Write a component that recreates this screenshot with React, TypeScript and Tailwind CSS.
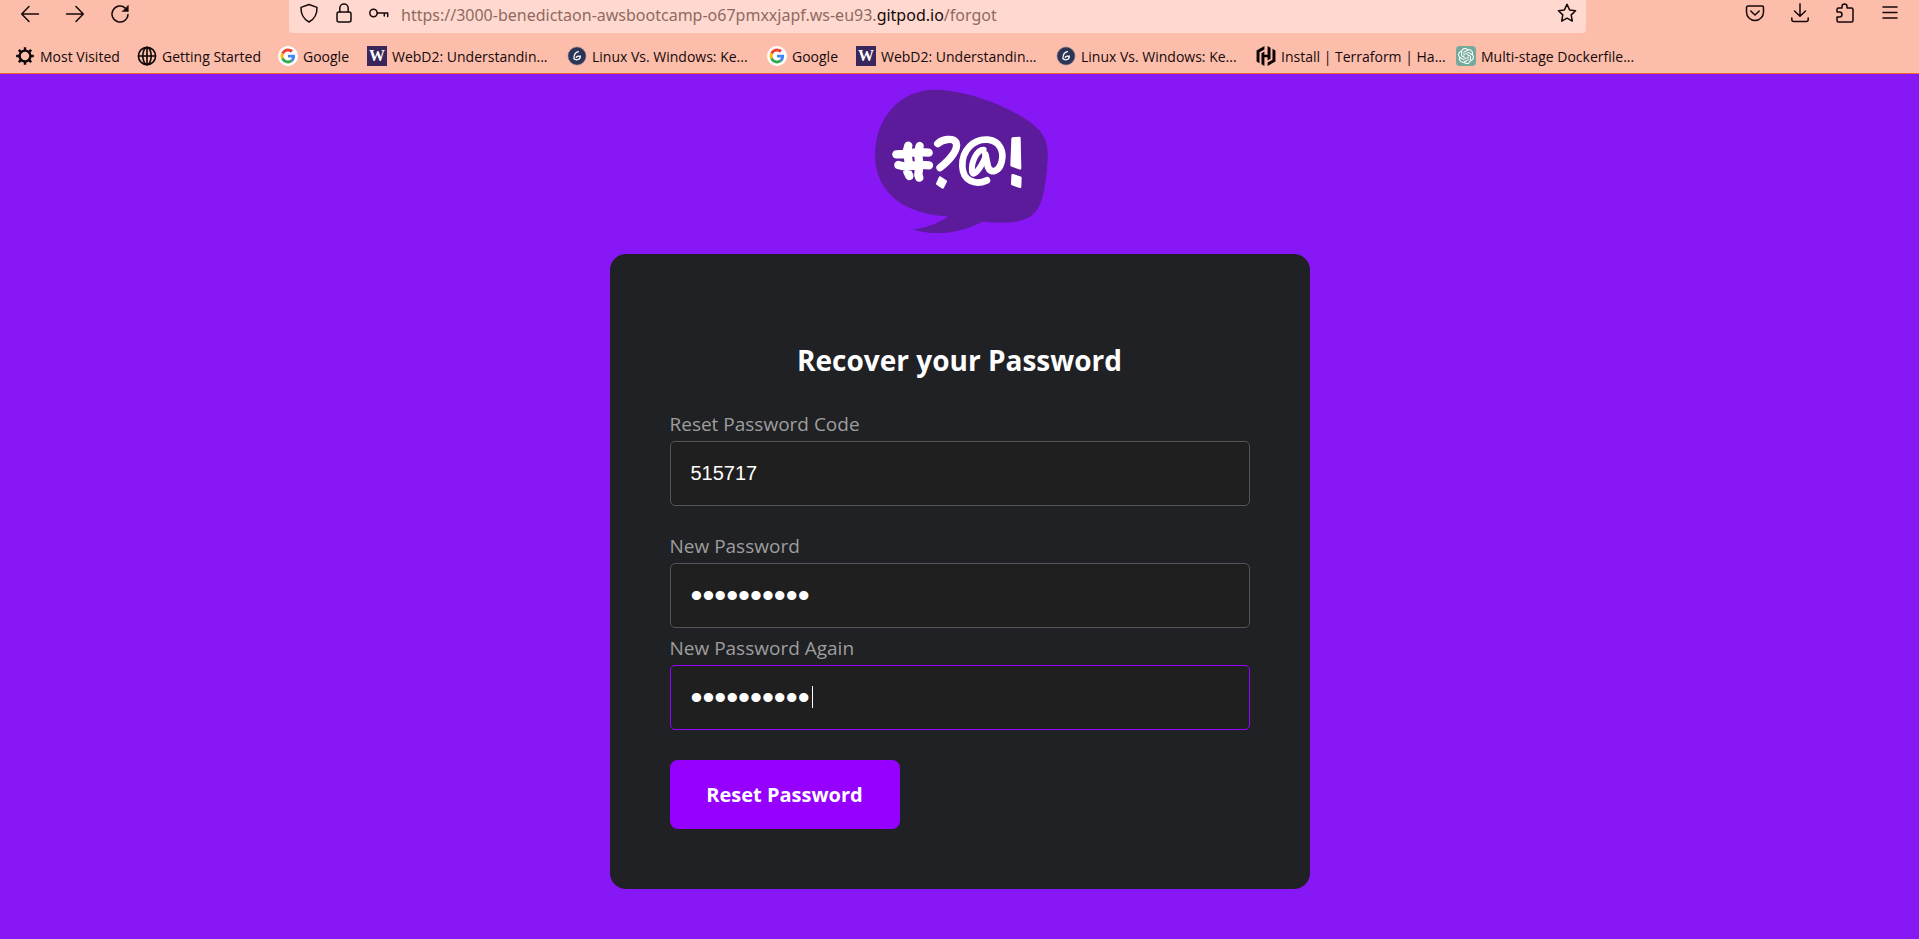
import type { ReactNode } from "react";
import { SiHashicorp, SiOpenai } from "react-icons/si";

const line = {
  fill: "none",
  stroke: "currentColor",
  strokeWidth: 1.5,
  strokeLinecap: "round" as const,
  strokeLinejoin: "round" as const,
};

function Icon({ children }: { children: ReactNode }) {
  return (
    <svg viewBox="0 0 20 20" className="h-5 w-5 shrink-0" aria-hidden="true" {...line}>
      {children}
    </svg>
  );
}

function GearIcon() {
  return (
    <svg viewBox="0 0 20 20" className="h-5 w-5 shrink-0" aria-hidden="true" fill="none" stroke="#0c0406">
      <circle cx="10" cy="10" r="5.4" strokeWidth="2.4" />
      <g strokeWidth="2.4">
        <path d="M10 1.2v3M10 15.8v3M1.2 10h3M15.8 10h3M3.8 3.8l2.1 2.1M14.1 14.1l2.1 2.1M3.8 16.2l2.1-2.1M14.1 5.9l2.1-2.1" />
      </g>
    </svg>
  );
}

function GlobeIcon() {
  return (
    <svg viewBox="0 0 20 20" className="h-5 w-5 shrink-0" aria-hidden="true" fill="none" stroke="#0c0406" strokeWidth="1.6">
      <circle cx="10" cy="10" r="8.6" />
      <ellipse cx="10" cy="10" rx="4.2" ry="8.6" />
      <path d="M1.4 10h17.2M10 1.4v17.2" />
    </svg>
  );
}

function GoogleIcon() {
  return (
    <svg viewBox="0 0 20 20" className="h-5 w-5 shrink-0" aria-hidden="true">
      <circle cx="10" cy="10" r="10" fill="#fff" />
      <g transform="translate(2.6 2.6) scale(0.308)">
        <path fill="#EA4335" d="M24 9.5c3.54 0 6.71 1.22 9.21 3.6l6.85-6.85C35.9 2.38 30.47 0 24 0 14.62 0 6.51 5.38 2.56 13.22l7.98 6.19C12.43 13.72 17.74 9.5 24 9.5z" />
        <path fill="#4285F4" d="M46.98 24.55c0-1.57-.15-3.09-.38-4.55H24v9.02h12.94c-.58 2.96-2.26 5.48-4.78 7.18l7.73 6c4.51-4.18 7.09-10.36 7.09-17.65z" />
        <path fill="#FBBC05" d="M10.53 28.59c-.48-1.45-.76-2.99-.76-4.59s.27-3.14.76-4.59l-7.98-6.19C.92 16.46 0 20.12 0 24c0 3.88.92 7.54 2.56 10.78l7.97-6.19z" />
        <path fill="#34A853" d="M24 48c6.48 0 11.93-2.13 15.89-5.81l-7.73-6c-2.15 1.45-4.92 2.3-8.16 2.3-6.26 0-11.57-4.22-13.47-9.91l-7.98 6.19C6.51 42.62 14.62 48 24 48z" />
      </g>
    </svg>
  );
}

function UwIcon() {
  return (
    <span className="flex h-5 w-5 shrink-0 items-center justify-center bg-[#39275b] font-['Liberation_Serif',serif] text-base leading-5 font-bold text-white" aria-hidden="true">
      W
    </span>
  );
}

function GeekIcon() {
  return (
    <svg viewBox="0 0 20 20" className="h-5 w-5 shrink-0" aria-hidden="true">
      <circle cx="10" cy="10" r="9" fill="#2b3556" stroke="#8a7c8a" strokeWidth="0.6" />
      <path d="M11.400 5.600C9 6 7 8.800 6.900 12.400M6.900 12.800c1.800 1.600 5.800 1.200 6.200-1.200.2-1.700-2.400-2-3.800-.4M13.200 9.800v2" fill="none" stroke="#fff" strokeWidth="1.3" strokeLinecap="round" />
    </svg>
  );
}

function HashiIcon() {
  return <SiHashicorp className="h-5 w-5 shrink-0 text-[#0c0406]" aria-hidden="true" />;
}

function ChatIcon() {
  return (
    <span className="flex h-5 w-5 shrink-0 items-center justify-center rounded-sm bg-[#74aa9c] text-white">
      <SiOpenai className="h-4 w-4" aria-hidden="true" />
    </span>
  );
}

const bookmarks: { label: string; icon: ReactNode; width: string }[] = [
  { label: "Most Visited", icon: <GearIcon />, width: "w-[122px]" },
  { label: "Getting Started", icon: <GlobeIcon />, width: "w-[141px]" },
  { label: "Google", icon: <GoogleIcon />, width: "w-[89px]" },
  { label: "WebD2: Understandin...", icon: <UwIcon />, width: "w-[200px]" },
  { label: "Linux Vs. Windows: Ke...", icon: <GeekIcon />, width: "w-[200px]" },
  { label: "Google", icon: <GoogleIcon />, width: "w-[89px]" },
  { label: "WebD2: Understandin...", icon: <UwIcon />, width: "w-[200px]" },
  { label: "Linux Vs. Windows: Ke...", icon: <GeekIcon />, width: "w-[200px]" },
  { label: "Install | Terraform | Ha...", icon: <HashiIcon />, width: "w-[200px]" },
  { label: "Multi-stage Dockerfile...", icon: <ChatIcon />, width: "w-[200px]" },
];

function BrowserBar() {
  return (
    <header className="border-b border-[#f0642d] bg-[#fcbdab] text-[#15090a]">
      <div className="flex h-[33px] items-start">
        <div className="flex w-[289px] shrink-0 gap-[25px] pt-1 pl-5">
          <button type="button" aria-label="Back">
            <Icon><path d="M18.500 10H2M9 2.500 1.700 10 9 17.500" /></Icon>
          </button>
          <button type="button" aria-label="Forward">
            <Icon><path d="M1.500 10H18M11 2.500 18.300 10 11 17.500" /></Icon>
          </button>
          <button type="button" aria-label="Reload">
            <Icon>
              <path d="M15.500 4.200A8 8 0 1 0 18 10.500" />
              <path d="M18.300 1.500v6h-6z" fill="currentColor" strokeWidth="0.5" />
            </Icon>
          </button>
        </div>
        <div className="flex h-[33px] flex-1 items-start rounded-b bg-[#ffd9cf] pt-[3px] pr-[9px] pl-[10px]">
          <div className="flex gap-[15px]">
            <Icon><path d="M10 1.500 18 4.400c.2 5.600-1.600 11.200-8 14.600C3.600 15.600 1.800 10 2 4.400z" /></Icon>
            <Icon>
              <rect x="3" y="9" width="14" height="10" rx="2" />
              <path d="M5.800 9V5.200a4.200 4.200 0 0 1 8.400 0V9" />
            </Icon>
            <Icon>
              <circle cx="4.500" cy="10" r="3.700" />
              <path d="M8.200 10h10.500v3.500M15.300 10v3" />
            </Icon>
          </div>
          <p className="ml-3 flex-1 font-['Noto_Sans',sans-serif] text-base leading-6 whitespace-nowrap text-[#8f6a62]">
            https://3000-benedictaon-awsbootcamp-o67pmxxjapf.ws-eu93.<span className="text-[#15090a]">gitpod.io</span>/forgot
          </p>
          <button type="button" aria-label="Bookmark this page">
            <Icon><path d="m10 1.300 2.600 5.600 6 .8-4.400 4.200 1.100 6.200L10 15.200l-5.300 2.900 1.100-6.200L1.400 7.700l6-.8z" /></Icon>
          </button>
        </div>
        <div className="flex w-[333px] shrink-0 justify-end gap-[25px] pt-[3px] pr-[19px]">
          <button type="button" aria-label="Save to Pocket">
            <Icon>
              <path d="M3 3h14a1.500 1.500 0 0 1 1.500 1.500V9a8.500 8.500 0 0 1-17 0V4.500A1.500 1.500 0 0 1 3 3z" />
              <path d="m5.800 8 4.200 4 4.200-4" />
            </Icon>
          </button>
          <button type="button" aria-label="Downloads">
            <Icon><path d="M10 .8v12M4.500 8 10 13.200 15.500 8M1.800 15v1.500a2 2 0 0 0 2 2h12.400a2 2 0 0 0 2-2V15" /></Icon>
          </button>
          <button type="button" aria-label="Extensions">
            <Icon><path d="M2 8V6.500A1.500 1.500 0 0 1 3.500 5H7V3.500a2.500 2.500 0 0 1 5 0V5h4.500A1.500 1.500 0 0 1 18 6.500v11a1.500 1.500 0 0 1-1.500 1.500h-13A1.500 1.500 0 0 1 2 17.500V14h2.500a2 2 0 0 0 0-5H2z" /></Icon>
          </button>
          <button type="button" aria-label="Menu">
            <Icon><path d="M3 4h14M3 9.500h14M3 15h14" /></Icon>
          </button>
        </div>
      </div>
      <nav aria-label="Bookmarks" className="flex h-10 items-center pt-[6px] pl-[15px] font-['Open_Sans',sans-serif] text-sm text-[#15090a]">
        {bookmarks.map((b, i) => (
          <a key={i} href="#" className={`flex shrink-0 items-center gap-[5px] whitespace-nowrap ${b.width}`}>
            {b.icon}
            <span className="pt-px">{b.label}</span>
          </a>
        ))}
      </nav>
    </header>
  );
}

function Logo() {
  return (
    <svg viewBox="0 0 600 570" className="mt-px h-[190px] w-[200px]" role="img" aria-label="Cruddur">
      <path
        fill="#5b1b9a"
        d="M230 44C120 42 45 130 45 240C45 350 130 418 264 424C240 444 200 458 160 464C230 484 300 474 368 440C420 444 470 446 505 428C545 405 552 360 560 290C566 230 566 200 538 166C480 105 330 46 230 44Z"
      />
      <g fill="none" stroke="#fff" strokeLinecap="round" strokeLinejoin="round">
        <path strokeWidth="25" d="M145 212 141 226 146 262 142 290 148 303M179 213 174 232 178 268 175 300 178 308M109 238 132 237 172 231 206 233M115 270 140 276 175 269 207 271" />
        <path strokeWidth="22" d="M233 206C249 192 278 188 288 202C297 224 268 256 240 278" />
        <path strokeWidth="20" d="M381 316C345 332 309 318 307 274C305 225 342 190 384 194C422 198 432 232 425 260C418 290 392 298 384 276L376 238" />
        <path strokeWidth="18" d="M371 224C350 224 333 262 336 290C340 309 362 280 377 244" />
      </g>
      <g fill="#fff" stroke="#fff" strokeWidth="8" strokeLinejoin="round">
        <path d="M240 308 257 319 248 337 232 326Z" />
        <path d="M458 191 478 189 480 280 455 271Z" />
        <path d="M458 301 481 308 480 335 457 327Z" />
      </g>
    </svg>
  );
}

type FieldProps = { id: string; label: string; value: string; secret?: boolean; active?: boolean };

function Field({ id, label, value, secret, active }: FieldProps) {
  return (
    <div className="flex flex-col">
      <label htmlFor={id} className="mb-[3px] text-[19px] leading-[27px] text-[#9e9e9e]">
        {label}
      </label>
      <div className="relative">
        <input
          id={id}
          type={secret ? "password" : "text"}
          defaultValue={value}
          autoFocus={active}
          className={`block h-[65px] w-full rounded-[5px] border border-[#555557] bg-[#1f1f1f] px-5 font-['Liberation_Sans',Arial,sans-serif] text-white caret-transparent outline-none focus:border-[#9500ff] ${secret ? "text-[34px]" : "text-xl"}`}
        />
        {active && <span aria-hidden="true" className="absolute top-[21px] left-[142px] h-[22px] w-px bg-white" />}
      </div>
    </div>
  );
}

export default function App() {
  return (
    <div className="flex min-h-screen flex-col bg-[#8817f5]">
      <BrowserBar />
      <main className="flex flex-1 flex-col items-center font-['Open_Sans',sans-serif]">
        <Logo />
        <form className="-mt-[11px] w-full max-w-[700px] rounded-2xl bg-[#202124] px-[60px] pt-[84px] pb-[60px]" onSubmit={(e) => e.preventDefault()}>
          <h1 className="text-center text-[28px] leading-[44px] font-bold text-white">Recover your Password</h1>
          <div className="mt-[29px] mb-[30px] flex flex-col">
            <Field id="code" label="Reset Password Code" value="515717" />
            <div className="mt-[27px] flex flex-col gap-[7px]">
              <Field id="password" label="New Password" value="abcdefghij" secret />
              <Field id="password-again" label="New Password Again" value="abcdefghij" secret active />
            </div>
          </div>
          <button type="submit" className="h-[69px] w-[230px] rounded-lg bg-[#9500ff] text-xl font-bold text-white">
            Reset Password
          </button>
        </form>
      </main>
    </div>
  );
}
